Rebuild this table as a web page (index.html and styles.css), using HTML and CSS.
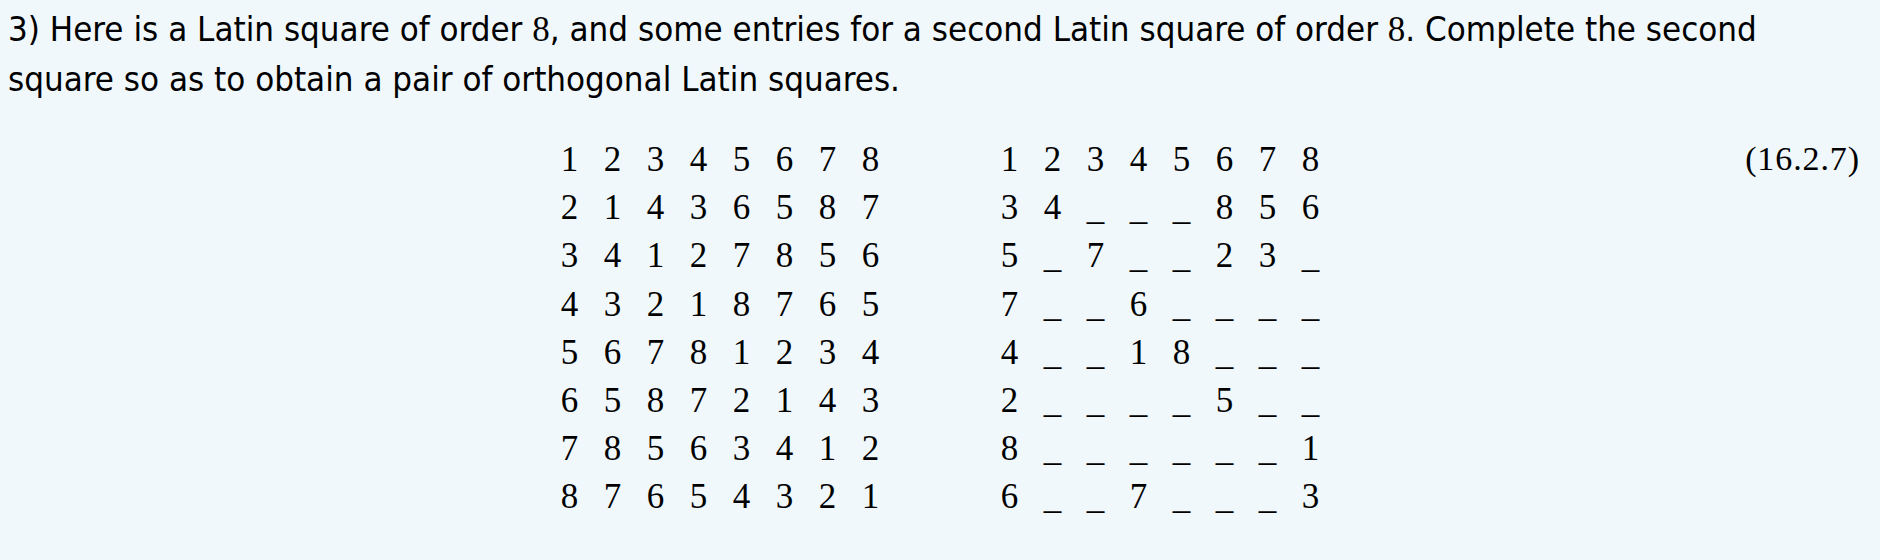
FILE: index.html
```html
<!DOCTYPE html>
<html>
<head>
<meta charset="utf-8">
<link rel="stylesheet" href="styles.css">
</head>
<body>
<div class="page">
  <p class="question">3) Here is a Latin square of order <span class="m">8</span>, and some entries for a second Latin square of order <span class="m">8</span>. Complete the second square so as to obtain a pair of orthogonal Latin squares.</p>
  <div class="display">
    <div class="spacer"></div>
    <div class="squares">
      <div class="square">
        <span>1</span><span>2</span><span>3</span><span>4</span><span>5</span><span>6</span><span>7</span><span>8</span>
        <span>2</span><span>1</span><span>4</span><span>3</span><span>6</span><span>5</span><span>8</span><span>7</span>
        <span>3</span><span>4</span><span>1</span><span>2</span><span>7</span><span>8</span><span>5</span><span>6</span>
        <span>4</span><span>3</span><span>2</span><span>1</span><span>8</span><span>7</span><span>6</span><span>5</span>
        <span>5</span><span>6</span><span>7</span><span>8</span><span>1</span><span>2</span><span>3</span><span>4</span>
        <span>6</span><span>5</span><span>8</span><span>7</span><span>2</span><span>1</span><span>4</span><span>3</span>
        <span>7</span><span>8</span><span>5</span><span>6</span><span>3</span><span>4</span><span>1</span><span>2</span>
        <span>8</span><span>7</span><span>6</span><span>5</span><span>4</span><span>3</span><span>2</span><span>1</span>
      </div>
      <div class="square">
        <span>1</span><span>2</span><span>3</span><span>4</span><span>5</span><span>6</span><span>7</span><span>8</span>
        <span>3</span><span>4</span><span>_</span><span>_</span><span>_</span><span>8</span><span>5</span><span>6</span>
        <span>5</span><span>_</span><span>7</span><span>_</span><span>_</span><span>2</span><span>3</span><span>_</span>
        <span>7</span><span>_</span><span>_</span><span>6</span><span>_</span><span>_</span><span>_</span><span>_</span>
        <span>4</span><span>_</span><span>_</span><span>1</span><span>8</span><span>_</span><span>_</span><span>_</span>
        <span>2</span><span>_</span><span>_</span><span>_</span><span>_</span><span>5</span><span>_</span><span>_</span>
        <span>8</span><span>_</span><span>_</span><span>_</span><span>_</span><span>_</span><span>_</span><span>1</span>
        <span>6</span><span>_</span><span>_</span><span>7</span><span>_</span><span>_</span><span>_</span><span>3</span>
      </div>
    </div>
    <div class="tag">(16.2.7)</div>
  </div>
</div>
</body>
</html>
```
FILE: styles.css
```css
html, body {
  margin: 0;
  padding: 0;
  background: #f1f8fb;
}
.page {
  padding: 4px 8px 0 8px;
  color: #000;
}
.question {
  margin: 0;
  font-family: "DejaVu Sans Condensed", "DejaVu Sans", sans-serif;
  font-stretch: condensed;
  font-size: 34.6px;
  line-height: 50px;
}
.m {
  font-family: "Liberation Serif", serif;
  font-size: 35px;
  line-height: 1;
}
.display {
  margin-top: 32px;
  display: grid;
  grid-template-columns: 1fr auto 1fr;
  align-items: start;
  font-family: "Liberation Serif", serif;
  font-size: 35px;
}
.squares {
  display: flex;
  gap: 96px;
}
.square {
  display: grid;
  grid-template-columns: repeat(8, 43px);
  line-height: 48.2px;
  text-align: center;
}
.tag {
  justify-self: end;
  font-size: 34px;
  letter-spacing: 0.9px;
  line-height: 46px;
  padding-right: 12px;
}
```
